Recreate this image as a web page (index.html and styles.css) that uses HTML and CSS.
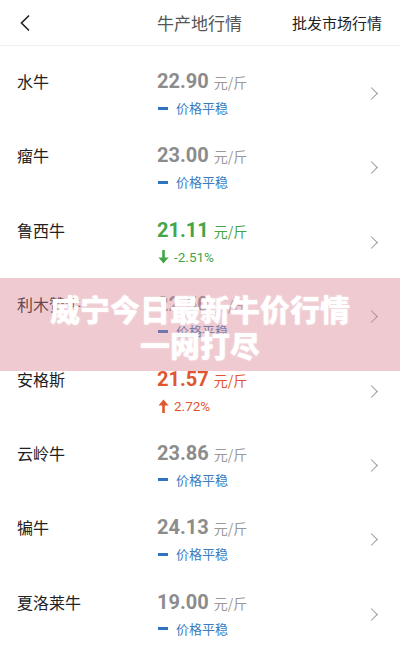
FILE: index.html
```html
<!DOCTYPE html>
<html lang="zh-CN">
<head>
  <meta charset="UTF-8">
  <meta name="viewport" content="width=device-width, initial-scale=1.0">
  <title>牛产地行情</title>
  <link rel="stylesheet" href="styles.css">
</head>
<body>

  <!-- Header -->
  <header class="topbar">
    <span class="back">
      <svg width="12" height="18" viewBox="0 0 12 18"><path d="M10 1.5 L2.5 9 L10 16.5" fill="none" stroke="#222" stroke-width="1.6"/></svg>
    </span>
    <span class="tab active">牛产地行情</span>
    <span class="tab other">批发市场行情</span>
  </header>

  <ul class="list">
    <li class="row">
      <span class="name">水牛</span>
      <div class="info">
        <div class="price flat">22.90 <small>元/斤</small></div>
        <div class="trend flat"><i class="dash"></i>价格平稳</div>
      </div>
      <span class="more"></span>
    </li>
    <li class="row">
      <span class="name">瘤牛</span>
      <div class="info">
        <div class="price flat">23.00 <small>元/斤</small></div>
        <div class="trend flat"><i class="dash"></i>价格平稳</div>
      </div>
      <span class="more"></span>
    </li>
    <li class="row">
      <span class="name">鲁西牛</span>
      <div class="info">
        <div class="price down">21.11 <small>元/斤</small></div>
        <div class="trend down">
          <svg class="arrow" width="11" height="14" viewBox="0 0 11 14"><path d="M5.5 0 V12" stroke="#43a548" stroke-width="2.6"/><path d="M0.5 7.5 L5.5 13.5 L10.5 7.5 Z" fill="#43a548"/></svg>-2.51%
        </div>
      </div>
      <span class="more"></span>
    </li>
    <li class="row">
      <span class="name">利木赞牛</span>
      <div class="info">
        <div class="price flat">22.50 <small>元/斤</small></div>
        <div class="trend flat"><i class="dash"></i>价格平稳</div>
      </div>
      <span class="more"></span>
    </li>
    <li class="row">
      <span class="name">安格斯</span>
      <div class="info">
        <div class="price up">21.57 <small>元/斤</small></div>
        <div class="trend up">
          <svg class="arrow" width="11" height="14" viewBox="0 0 11 14"><path d="M5.5 14 V2" stroke="#e0562f" stroke-width="2.6"/><path d="M0.5 6.5 L5.5 0.5 L10.5 6.5 Z" fill="#e0562f"/></svg>2.72%
        </div>
      </div>
      <span class="more"></span>
    </li>
    <li class="row">
      <span class="name">云岭牛</span>
      <div class="info">
        <div class="price flat">23.86 <small>元/斤</small></div>
        <div class="trend flat"><i class="dash"></i>价格平稳</div>
      </div>
      <span class="more"></span>
    </li>
    <li class="row">
      <span class="name">犏牛</span>
      <div class="info">
        <div class="price flat">24.13 <small>元/斤</small></div>
        <div class="trend flat"><i class="dash"></i>价格平稳</div>
      </div>
      <span class="more"></span>
    </li>
    <li class="row">
      <span class="name">夏洛莱牛</span>
      <div class="info">
        <div class="price flat">19.00 <small>元/斤</small></div>
        <div class="trend flat"><i class="dash"></i>价格平稳</div>
      </div>
      <span class="more"></span>
    </li>
  </ul>

  <!-- Title banner laid over the list -->
  <div class="banner">
    <p>威宁今日最新牛价行情</p>
    <p>一网打尽</p>
  </div>

</body>
</html>
```

FILE: styles.css
```css
/* Page */
body {
  margin: 0;
  background: #fff;
  font-family: Roboto, "Noto Sans CJK SC", sans-serif;
  color: #222;
  position: relative;
  height: 653px;
  overflow: hidden;
}

/* Header */
.topbar {
  height: 46px;
  display: flex;
  align-items: center;
  border-bottom: 1px solid #f0f0f0;
  box-sizing: border-box;
}

.back {
  width: 140px;
  padding-left: 19px;
  display: flex;
  align-items: center;
  box-sizing: border-box;
}

.tab {
  font-family: "Noto Sans CJK SC", sans-serif;
}

.tab.active {
  font-size: 17px;
  color: #555;
  margin-left: 17px;
}

.tab.other {
  font-size: 15px;
  color: #222;
  margin-left: auto;
  margin-right: 18px;
}

/* List */
.list {
  list-style: none;
  margin: 0;
  padding: 12px 0 0;
}

.row {
  height: 74.4px;
  display: flex;
  align-items: flex-start;
  padding: 10px 0 0 17px;
  box-sizing: border-box;
}

.name {
  width: 140px;
  font-family: "Noto Sans CJK SC", sans-serif;
  font-size: 16px;
  line-height: 26px;
}

.info {
  flex: 1;
}

.price {
  font-size: 20px;
  font-weight: bold;
  line-height: 26px;
}

.price small {
  font-family: "Noto Sans CJK SC", sans-serif;
  font-size: 14px;
  font-weight: normal;
}

.trend {
  display: flex;
  align-items: center;
  font-family: "Noto Sans CJK SC", sans-serif;
  font-size: 13px;
  line-height: 20px;
  margin-top: 3px;
}

.dash {
  width: 10px;
  height: 3px;
  background: #2e74c0;
  margin: 0 8px 0 1px;
}

.arrow {
  margin: 0 5px 0 1px;
}

.price.flat { color: #8c8c8c; }
.price.flat small { color: #999; }
.trend.flat { color: #3a7cbf; }

.price.down, .price.down small, .trend.down { color: #43a548; }
.price.up, .price.up small, .trend.up { color: #e0562f; }

.trend.down, .trend.up {
  font-family: Roboto, sans-serif;
  font-size: 13.5px;
}

.more {
  width: 8px;
  height: 8px;
  border-top: 1.2px solid #999;
  border-right: 1.2px solid #999;
  transform: rotate(45deg);
  margin: 21px 24px 0 0;
}

/* Banner */
.banner {
  position: absolute;
  left: 0;
  right: 0;
  top: 278px;
  height: 93px;
  background: rgba(215, 125, 140, 0.4);
  text-align: center;
  box-sizing: border-box;
  padding-top: 12px;
}

.banner p {
  margin: 0;
  font-family: "Noto Sans CJK SC", sans-serif;
  font-weight: 900;
  font-size: 30px;
  line-height: 36px;
  color: #fff;
  text-shadow: 0 0 2px rgba(255, 255, 255, 0.6);
}
```
